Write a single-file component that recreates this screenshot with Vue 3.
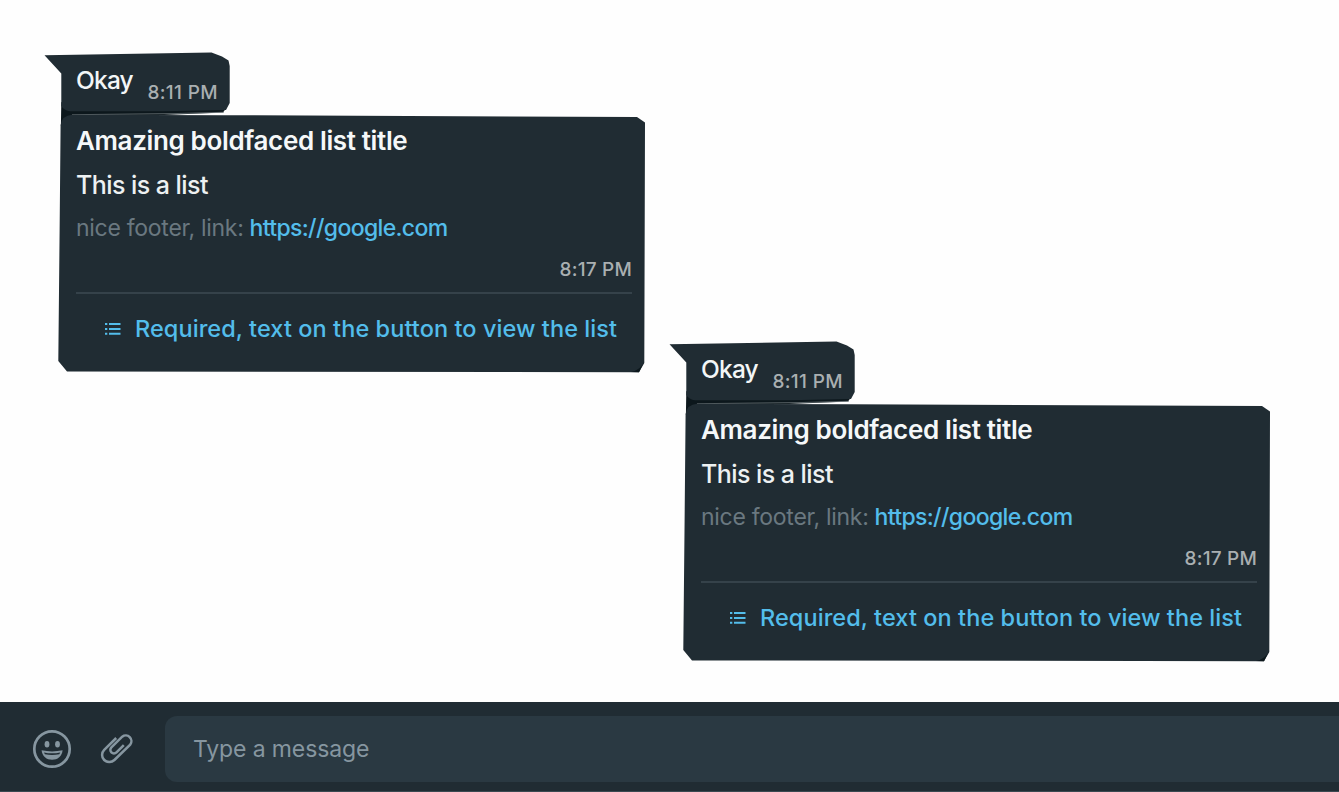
<script setup>
const threads = [
  { id: 'first', place: 'thread-left' },
  { id: 'second', place: 'thread-right' },
]
</script>

<template>
  <main class="screen">
    <section class="canvas">
      <article v-for="t in threads" :key="t.id" class="thread" :class="t.place">
        <svg class="shape" viewBox="0 0 604 322" aria-hidden="true">
          <path d="M17.3 50L28 55H183L179 60.5L120 63L28 64L16.9 74Z" fill="#0c171c" />
          <path d="M0.5 3.3L167.5 0.6L178 4.5L184.5 8.5L185.7 14V51L182 58L120 59.3H26Q20 58.5 17.3 54V21.5Z" fill="#202c33" />
          <path d="M28 62.7L130 61.6L180 60.3" fill="none" stroke="#7c8588" stroke-width=".7" />
          <path d="M16.6 73Q18 63.5 28 62.8L180 63.2L593 65L601 70.5L600.3 311L595 320.2L23 319.4L14.3 309L15.6 180Z" fill="#202c33" />
          <path d="M600.4 309L595 320.2L587 320Q597 318 600.4 309Z" fill="#0c171c" />
        </svg>
        <div class="bubble">
          <span class="okay">Okay</span>
          <time class="time">8:11 PM</time>
        </div>
        <div class="card">
          <h2 class="title">Amazing boldfaced list title</h2>
          <p class="body">This is a list</p>
          <p class="footer"><span class="foot">nice footer, link:</span><a class="link">https://google.com</a></p>
          <time class="time card-time">8:17 PM</time>
          <div class="action">
            <svg class="list-icon" viewBox="0 0 16 14" aria-hidden="true">
              <path d="M0 2H2.3M4 2H15.5M0 7H2.3M4 7H15.5M0 11.7H2.3M4 11.7H15.5" stroke="currentColor" stroke-width="1.9" />
            </svg>
            <span class="action-text">Required, text on the button to view the list</span>
          </div>
        </div>
      </article>
    </section>
    <footer class="composer">
      <svg class="smile" viewBox="0 0 40 40" aria-hidden="true">
        <circle cx="20" cy="20" r="17.7" fill="none" stroke="currentColor" stroke-width="2.7" />
        <ellipse cx="15" cy="15.2" rx="2.4" ry="3.2" fill="currentColor" />
        <ellipse cx="25.5" cy="15.2" rx="2.4" ry="3.2" fill="currentColor" />
        <path d="M9.6 21.3Q20 23.5 30.6 21.3C30 27.5 25.5 30.8 20.1 30.8S10.2 27.5 9.6 21.3Z" fill="currentColor" />
        <path d="M12 23.4Q20 25.2 28.2 23.4L27.3 25.3Q20 26.8 12.9 25.3Z" fill="#202c33" />
      </svg>
      <svg class="clip" viewBox="0 0 34 32" aria-hidden="true">
        <path d="M16.2 5L4.2 16.8A7.2 7.2 0 0 0 14.4 27L30.2 11.7A5.7 5.7 0 0 0 22.2 3.7L11.4 14.3A3.6 3.6 0 0 0 16.5 19.4L23.8 12.2" fill="none" stroke="currentColor" stroke-width="2.5" />
      </svg>
      <div class="field">Type a message</div>
    </footer>
  </main>
</template>

<style>
body { margin: 0; background: #fff; }
</style>

<style scoped>
.screen {
  width: 1339px;
  height: 792px;
  display: flex;
  flex-direction: column;
  overflow: hidden;
  background: #fefefe;
  font-family: Inter, "Liberation Sans", sans-serif;
  white-space: nowrap;
}
.canvas { position: relative; height: 702px; flex: none; }
.thread { position: absolute; width: 604px; height: 322px; }
.thread-left { left: 44px; top: 52px; }
.thread-right { left: 669px; top: 341px; }
.shape { position: absolute; inset: 0; width: 604px; height: 322px; }
.bubble {
  position: relative;
  display: flex;
  align-items: flex-start;
  box-sizing: border-box;
  height: 62px;
  width: 186px;
  padding: 13px 12px 0 32px;
  justify-content: space-between;
}
.okay { font-size: 24.5px; line-height: 30px; font-weight: 500; color: #f3f6f7; letter-spacing: -.8px; }
.time { font-size: 19px; line-height: 24px; font-weight: 450; color: #a9afb1; letter-spacing: .2px; }
.bubble .time { margin-top: 16px; letter-spacing: .35px; }
.card {
  position: relative;
  display: flex;
  flex-direction: column;
  box-sizing: border-box;
  width: 588px;
  padding-left: 32px;
}
.title { margin: 10px 0 0; font-size: 26px; line-height: 34px; font-weight: 600; color: #f5f8f9; letter-spacing: -.36px; }
.body { margin: 11px 0 0; font-size: 25px; line-height: 32px; font-weight: 500; color: #edf1f2; letter-spacing: -.55px; }
.footer { display: flex; margin: 12px 0 0; font-size: 23px; line-height: 30px; gap: 6px; }
.foot { color: #6a7880; letter-spacing: -.28px; }
.link { color: #53bdeb; font-weight: 500; letter-spacing: -.65px; }
.card-time { align-self: flex-end; margin-top: 15px; }
.action {
  display: flex;
  align-items: center;
  height: 70px;
  margin-top: 10px;
  padding-left: 29px;
  border-top: 2px solid #35424a;
  color: #53bdeb;
}
.list-icon { width: 16px; height: 14px; flex: none; margin-right: 14px; }
.action-text { font-size: 23.5px; line-height: 30px; font-weight: 500; letter-spacing: .07px; }
.composer {
  display: flex;
  align-items: center;
  box-sizing: border-box;
  height: 90px;
  padding: 0 0 0 32px;
  background: #202c33;
  border-bottom: 1px solid #3b4951;
  color: #8696a0;
}
.smile { width: 40px; height: 40px; margin-top: 5px; flex: none; }
.clip { width: 34px; height: 32px; margin: 5px 31px 0 28px; flex: none; }
.field {
  flex: 1;
  box-sizing: border-box;
  height: 66px;
  margin-top: 5px;
  padding-left: 28px;
  border-radius: 12px 0 0 12px;
  background: #2a3942;
  font-size: 23px;
  line-height: 66px;
  letter-spacing: -.12px;
  color: #8696a0;
}
</style>
